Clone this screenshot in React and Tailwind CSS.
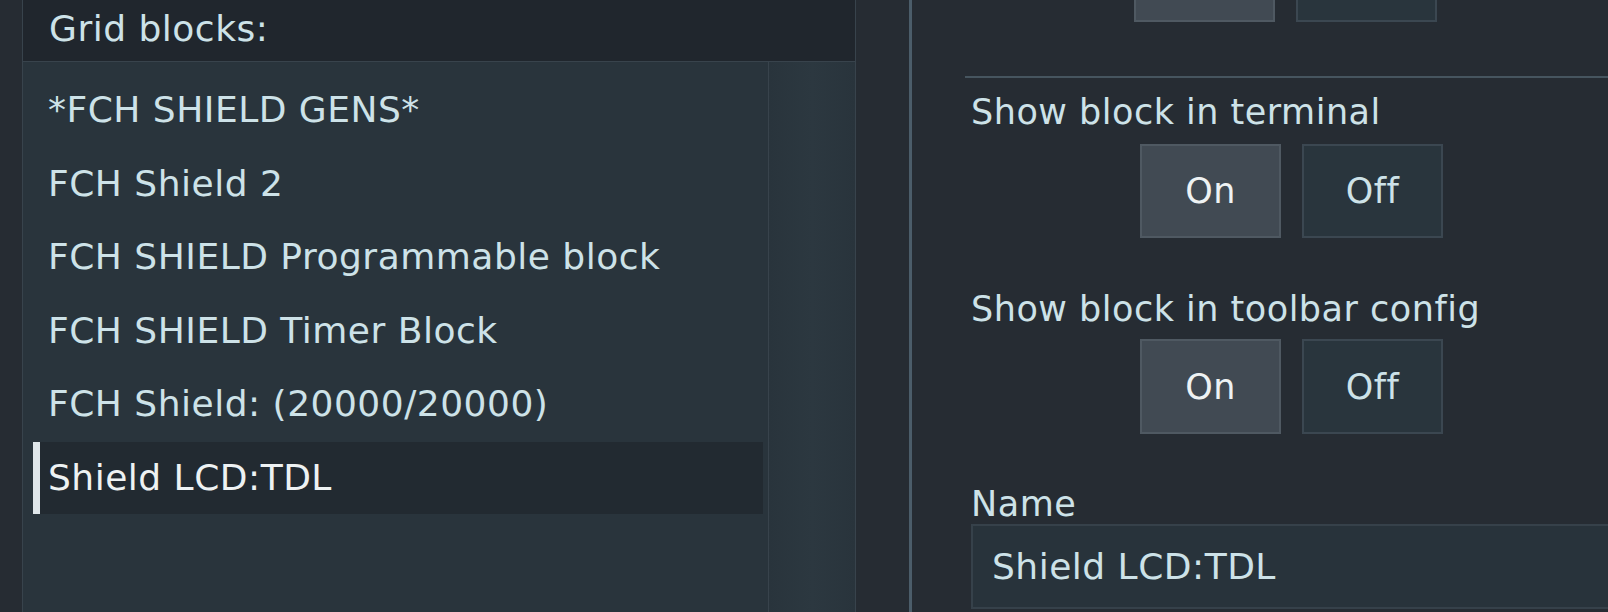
import React from "react";

const items = [
    "*FCH SHIELD GENS*",
    "FCH Shield 2",
    "FCH SHIELD Programmable block",
    "FCH SHIELD Timer Block",
    "FCH Shield: (20000/20000)",
    "Shield LCD:TDL",
];

const Toggle = ({ className = "", labels = true }) => (
    <div className={"flex gap-[21px] ml-[169px] " + className}>
        <div className="w-[141px] h-full flex items-center justify-center bg-[#414a53] border-2 border-[#4f5962] text-[#eef2f3] text-[35px]">
            {labels && "On"}
        </div>
        <div className="w-[141px] h-full flex items-center justify-center bg-[#29353d] border-2 border-[#3b4751] text-[#cde2e8] text-[35px]">
            {labels && "Off"}
        </div>
    </div>
);

const App = () => {
    const selected = 5;

    return (
        <div className="w-[1608px] h-[612px] overflow-hidden flex bg-[#262c33] text-[#cde2e8] font-['DejaVu_Sans',sans-serif] leading-[42px] tracking-[0.5px]">
            {/* grid blocks list */}
            <div className="ml-[22px] w-[834px] shrink-0 h-full flex flex-col border-l border-r border-[#38434c]">
                <div className="h-[62px] shrink-0 flex items-center pl-[26px] pb-[4px] bg-[#20262d] border-b border-[#38434c] text-[36px]">
                    Grid blocks:
                </div>
                <div className="flex-1 flex">
                    <div className="flex-1 bg-[#29343c] pl-[10px] pr-[5px] pt-[12px] flex flex-col gap-[1.6px]">
                        {items.map((item, i) => (
                            <div
                                key={item}
                                className={
                                    i === selected
                                        ? "h-[72px] shrink-0 flex items-center border-l-[7px] border-[#dfe6ea] pl-[8px] bg-[#222a31] text-[#eef2f3] text-[36px]"
                                        : "h-[72px] shrink-0 flex items-center border-l-[7px] border-transparent pl-[8px] text-[36px]"
                                }
                            >
                                {item}
                            </div>
                        ))}
                    </div>
                    <div className="w-[87px] border-l border-[#38434c] bg-gradient-to-r from-[#29343c] via-[#2c3840] to-[#29343c]" />
                </div>
            </div>

            {/* divider */}
            <div className="ml-[53px] w-[3px] shrink-0 h-full bg-[#4b5d6a]" />

            {/* block settings */}
            <div className="flex-1 min-w-0 pl-[53px] flex flex-col">
                <Toggle className="-mt-[72px] h-[94px] shrink-0" labels={false} />
                <div className="mt-[54px] h-[2px] shrink-0 bg-[#46555f]" />
                <div className="pl-[6px] flex flex-col">
                    <div className="mt-[13px] h-[42px] text-[35px] whitespace-nowrap">Show block in terminal</div>
                    <Toggle className="mt-[11px] h-[94px]" />
                    <div className="mt-[50px] h-[42px] text-[35px] whitespace-nowrap">Show block in toolbar config</div>
                    <Toggle className="mt-[9px] h-[95px]" />
                    <div className="mt-[49px] h-[41px] text-[35px]">Name</div>
                    <div className="h-[85px] w-[700px] shrink-0 flex items-center pl-[19px] bg-[#28333b] border-2 border-[#36414a] text-[36px]">
                        Shield LCD:TDL
                    </div>
                </div>
            </div>
        </div>
    );
};

export default App;
